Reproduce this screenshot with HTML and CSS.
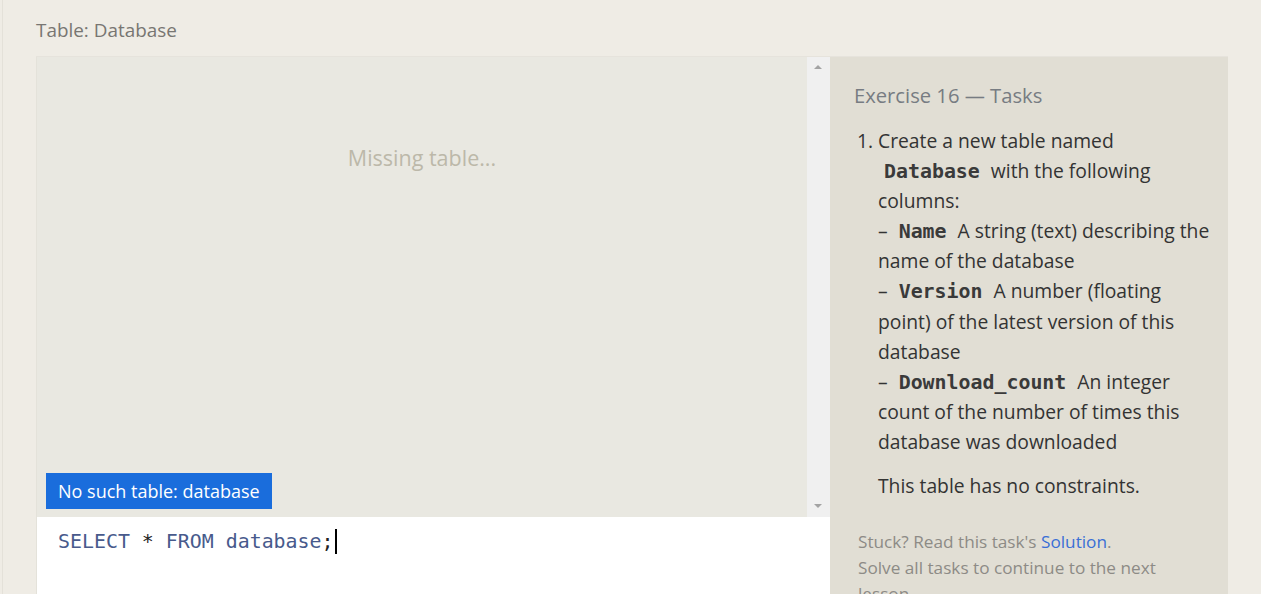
FILE: index.html
```html
<!DOCTYPE html>
<html lang="en">
<head>
<meta charset="utf-8">
<title>Table: Database</title>
<link rel="stylesheet" href="styles.css">
</head>
<body>
<div class="page">
  <h1 class="table-title">Table: Database</h1>
  <div class="workspace">
    <div class="left">
      <div class="results">
        <div class="results-area">
          <div class="missing">Missing table...</div>
          <div class="error-badge">No such table: database</div>
        </div>
        <div class="scrollbar">
          <span class="arrow arrow-up"></span>
          <span class="arrow arrow-down"></span>
        </div>
      </div>
      <div class="editor">
        <div class="code-line"><span class="kw">SELECT</span> <span class="op">*</span> <span class="kw">FROM</span> <span class="id">database</span><span class="op">;</span><span class="cursor"></span></div>
      </div>
    </div>
    <div class="tasks">
      <h2 class="tasks-title">Exercise 16 — Tasks</h2>
      <ol class="task-list">
        <li>Create a new table named <code>Database</code> with the following columns:<br>– <code>Name</code> A string (text) describing the name of the database<br>– <code>Version</code> A number (floating point) of the latest version of this database<br>– <code>Download_count</code> An integer count of the number of times this database was downloaded
          <p class="note">This table has no constraints.</p>
        </li>
      </ol>
      <div class="help">
        <p>Stuck? Read this task's <a class="link" href="#">Solution</a>.</p>
        <p>Solve all tasks to continue to the next lesson.</p>
      </div>
    </div>
  </div>
</div>
</body>
</html>
```

FILE: styles.css
```css
html, body {
  margin: 0;
  padding: 0;
  background: #efece5;
}
body {
  font-family: "Open Sans", "Noto Sans", sans-serif;
  color: #333;
  overflow: hidden;
  height: 594px;
}
.page {
  margin-left: 2px;
  border-left: 1px solid #e4e1d9;
  padding: 16px 32px 0 33px;
  min-height: 700px;
}
.table-title {
  margin: 0 0 12px 0;
  font-size: 18.9px;
  font-weight: 400;
  color: #787672;
  line-height: 28px;
}
.workspace {
  display: flex;
  width: 1192px;
  border-top: 1px solid #e6e3dc;
}
.left {
  width: 794px;
  flex: none;
  display: flex;
  flex-direction: column;
}
.results {
  display: flex;
  height: 460px;
}
.results-area {
  flex: 1;
  position: relative;
  background: #e9e8e1;
  border-left: 1px solid #e4e2da;
}
.missing {
  text-align: center;
  padding-top: 86px;
  font-size: 21.5px;
  color: #bcb8a9;
}
.error-badge {
  position: absolute;
  left: 9px;
  bottom: 8px;
  height: 36px;
  padding: 0 12px;
  background: #1a6ddc;
  color: #fff;
  font-size: 18px;
  line-height: 36px;
}
.scrollbar {
  width: 23px;
  flex: none;
  background: #f0f0f0;
  position: relative;
}
.arrow {
  position: absolute;
  left: 7px;
  width: 0;
  height: 0;
  border-left: 4px solid transparent;
  border-right: 4px solid transparent;
}
.arrow-up {
  top: 8px;
  border-bottom: 4px solid #a3a3a3;
}
.arrow-down {
  bottom: 9px;
  border-top: 4px solid #a3a3a3;
}
.editor {
  background: #fff;
  height: 120px;
  padding: 12px 0 0 21px;
  border-left: 1px solid #e4e2da;
}
.code-line {
  font-family: "DejaVu Sans Mono", "Liberation Mono", monospace;
  font-size: 19.9px;
  line-height: 26px;
  color: #485a8c;
  white-space: pre;
}
.code-line .op {
  color: #222;
}
.cursor {
  display: inline-block;
  width: 2px;
  height: 25px;
  background: #000;
  margin-left: 1px;
  vertical-align: -6px;
}
.tasks {
  flex: none;
  width: 362px;
  background: #e1ded4;
  padding: 23px 12px 0 24px;
}
.tasks-title {
  margin: 0 0 16px 0;
  font-size: 20.2px;
  font-weight: 400;
  color: #777c82;
  line-height: 30px;
}
.task-list {
  margin: 0;
  padding-left: 24px;
  font-size: 19.3px;
  line-height: 30.1px;
  color: #333;
}
.task-list code {
  font-family: "DejaVu Sans Mono", "Liberation Mono", monospace;
  font-weight: bold;
  font-size: 19.9px;
  line-height: 1;
  padding: 0 6px;
  color: #3a3a3a;
}
.note {
  margin: 14px 0 0 0;
}
.help {
  margin-top: 28px;
  padding: 0 10px 0 4px;
  font-size: 17.2px;
  line-height: 26px;
  color: #8d8b86;
}
.help p {
  margin: 0;
}
.link {
  color: #3a6fd6;
  text-decoration: none;
}
```
